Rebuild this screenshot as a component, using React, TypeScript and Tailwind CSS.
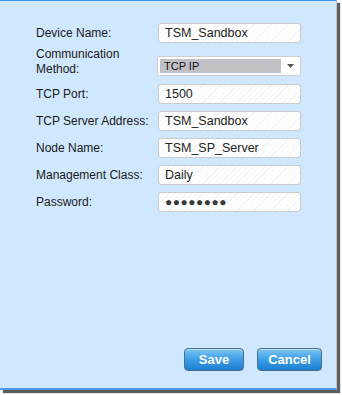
import React from 'react';

const hatch =
  'bg-[repeating-linear-gradient(135deg,#ffffff_0px,#ffffff_3px,#f4f4f4_3px,#f4f4f4_4px)]';

const Field: React.FC<{ label: string; value: string; mt: string; password?: boolean }> = ({
  label,
  value,
  mt,
  password,
}) => (
  <div className={`flex items-center ${mt}`}>
    <div className="w-[122px] text-[12px] leading-[15px] text-[#1a1a1a]">{label}</div>
    <div
      className={`w-[143px] h-[20px] rounded-[3px] border border-[#cbcbcb] ${hatch} flex items-center pl-[6px] text-[12.5px] text-[#222]`}
    >
      {password ? (
        <span className="text-[12px] tracking-[0.5px] text-[#3a3a3a]">●●●●●●●●</span>
      ) : (
        value
      )}
    </div>
  </div>
);

const Btn: React.FC<{ label: string; w: string }> = ({ label, w }) => (
  <button
    className={`${w} h-[23px] rounded-[4px] border border-[#4b6d8e] bg-[linear-gradient(#7cc6f4,#3d9ee6_50%,#1b7fd1)] text-white font-bold text-[13px] shadow-[inset_0_1px_0_rgba(255,255,255,0.5)]`}
  >
    {label}
  </button>
);

export default function App() {
  return (
    <div
      className="w-[342px] h-[395px] bg-white"
      style={{ fontFamily: '"Liberation Sans", Arial, sans-serif' }}
    >
      <div className="w-[337px] h-[390px] bg-[#cfe8fd] border-t border-t-[#3d8ff0] border-b-2 border-b-[#4d95ec] border-r border-r-[#b8c6d2] shadow-[3px_3px_1px_rgba(40,40,40,0.75)] flex flex-col pl-[36px]">
        <Field label="Device Name:" value="TSM_Sandbox" mt="mt-[22px]" />
        <div className="flex items-end mt-[4px]">
          <div className="w-[121px] text-[12px] leading-[15px] text-[#1a1a1a]">
            Communication
            <br />
            Method:
          </div>
          <div className="w-[144px] h-[20px] rounded-[2px] border border-[#cfcfcf] bg-white flex items-stretch mb-[1px]">
            <div className="flex-1 m-[2px] mr-0 bg-[#c1c0c5] flex items-center pl-[4px] text-[11px] text-[#111]">
              TCP IP
            </div>
            <div className="w-[19px] flex items-center justify-center">
              <svg width="7" height="4" viewBox="0 0 7 4">
                <path d="M0 0h7L3.5 4z" fill="#555" />
              </svg>
            </div>
          </div>
        </div>
        <Field label="TCP Port:" value="1500" mt="mt-[7px]" />
        <Field label="TCP Server Address:" value="TSM_Sandbox" mt="mt-[7px]" />
        <Field label="Node Name:" value="TSM_SP_Server" mt="mt-[7px]" />
        <Field label="Management Class:" value="Daily" mt="mt-[7px]" />
        <Field label="Password:" value="" mt="mt-[7px]" password />
        <div className="flex-1" />
        <div className="flex justify-end gap-[13px] pr-[14px] mb-[17px]">
          <Btn label="Save" w="w-[60px]" />
          <Btn label="Cancel" w="w-[65px]" />
        </div>
      </div>
    </div>
  );
}
